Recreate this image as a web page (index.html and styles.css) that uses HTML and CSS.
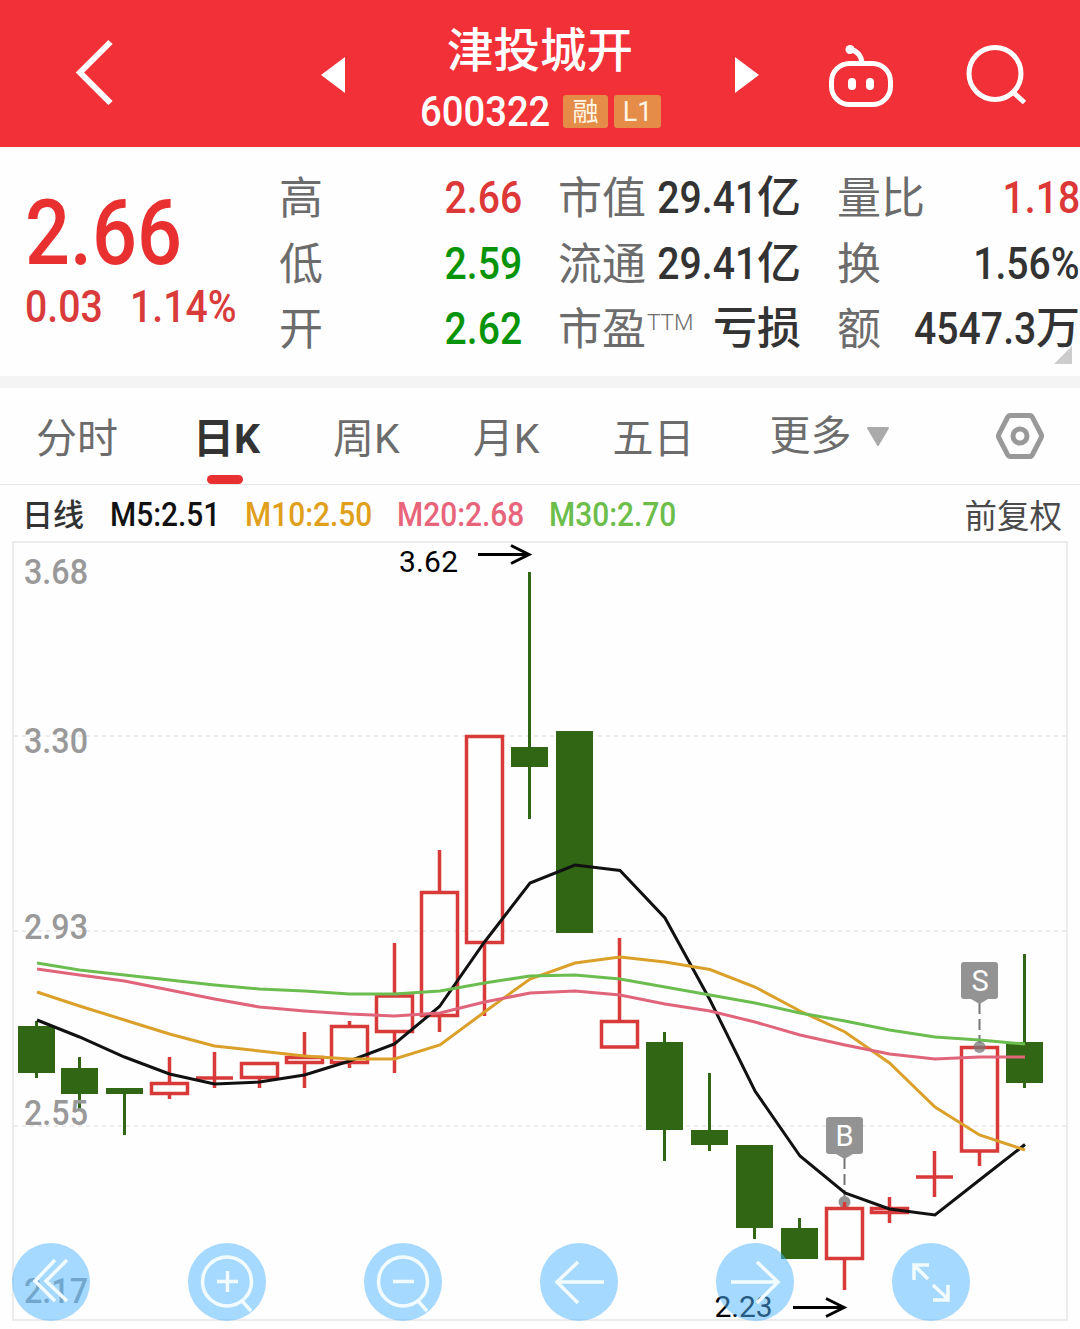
FILE: index.html
```html
<!DOCTYPE html>
<html lang="zh-CN">
<head>
    <meta charset="UTF-8">
    <meta name="viewport" content="width=device-width, initial-scale=1.0">
    <title>津投城开 600322</title>
    <link rel="stylesheet" href="styles.css">
</head>
<body>

    <!-- Header -->
    <header class="header">
        <svg class="back" width="40" height="68" viewBox="0 0 40 68"><path d="M36.500 5 L6 35.500 L36.500 66"/></svg>
        <svg class="prev" width="24" height="36" viewBox="0 0 24 36"><path d="M0 18 L24 0 V36 Z"/></svg>
        <div class="stock">
            <h1>津投城开</h1>
            <div class="code-row">
                <span class="code"><span class="num">600322</span></span>
                <span class="tag">融</span>
                <span class="tag tag-level">L1</span>
            </div>
        </div>
        <svg class="next" width="24" height="36" viewBox="0 0 24 36"><path d="M24 18 L0 0 V36 Z"/></svg>
        <svg class="robot" width="64" height="64" viewBox="0 0 64 64">
            <rect x="2.5" y="20.5" width="59" height="41" rx="18"/>
            <path d="M21 6 Q32 9 33 20"/>
            <circle class="fill" cx="21" cy="6.5" r="4.5"/>
            <rect class="fill" x="19" y="35" width="8" height="12" rx="4"/>
            <rect class="fill" x="37" y="35" width="8" height="12" rx="4"/>
        </svg>
        <svg class="search" width="62" height="62" viewBox="0 0 62 62">
            <circle cx="29" cy="29.500" r="26"/>
            <path d="M48 49 L58.500 58.500"/>
        </svg>
    </header>

    <!-- Quote -->
    <section class="quote">
        <div class="price">
            <div class="current"><span class="num">2.66</span></div>
            <div class="change"><span class="num">0.03</span><span class="num">1.14%</span></div>
        </div>
        <div class="stats">
            <div class="stat"><label>高</label><b class="up"><span class="num">2.66</span></b></div>
            <div class="stat"><label>市值</label><b><span class="num">29.41</span>亿</b></div>
            <div class="stat"><label>量比</label><b class="up"><span class="num">1.18</span></b></div>
            <div class="stat"><label>低</label><b class="down"><span class="num">2.59</span></b></div>
            <div class="stat"><label>流通</label><b><span class="num">29.41</span>亿</b></div>
            <div class="stat"><label>换</label><b><span class="num">1.56%</span></b></div>
            <div class="stat"><label>开</label><b class="down"><span class="num">2.62</span></b></div>
            <div class="stat"><label>市盈<sup>TTM</sup></label><b>亏损</b></div>
            <div class="stat"><label>额</label><b><span class="num">4547.3</span>万</b></div>
        </div>
        <i class="corner"></i>
    </section>

    <!-- Period tabs -->
    <nav class="tabs">
        <a>分时</a>
        <a class="active">日K</a>
        <a>周K</a>
        <a>月K</a>
        <a>五日</a>
        <a class="more">更多<svg width="22" height="19" viewBox="0 0 22 19"><path d="M1 1 H21 L11 18 Z"/></svg></a>
        <svg class="settings" width="50" height="48" viewBox="0 0 50 48">
            <path d="M15.500 3.500 H34.500 Q36.500 3.500 37.500 5.500 L46 22 Q47 24 46 26 L37.500 42.500 Q36.500 44.500 34.500 44.500 H15.500 Q13.500 44.500 12.500 42.500 L4 26 Q3 24 4 22 L12.500 5.500 Q13.500 3.500 15.500 3.500 Z"/>
            <circle cx="25" cy="24" r="7"/>
        </svg>
    </nav>

    <!-- Moving averages -->
    <div class="averages">
        <span class="line-name">日线</span>
        <span class="ma ma5"><span class="num">M5:2.51</span></span>
        <span class="ma ma10"><span class="num">M10:2.50</span></span>
        <span class="ma ma20"><span class="num">M20:2.68</span></span>
        <span class="ma ma30"><span class="num">M30:2.70</span></span>
        <span class="adjust">前复权</span>
    </div>

    <!-- Chart -->
    <section class="chart">
        <svg class="candles" width="1080" height="788" viewBox="0 541 1080 788">
            <rect class="frame" x="13" y="542" width="1054" height="778"/>
            <path class="grid" d="M14 736 H1066 M14 931 H1066 M14 1126 H1066"/>

            <!-- falling days -->
            <path class="wick-down" d="M36.500 1021 V1078 M79.500 1057 V1109 M124.500 1088 V1135 M529.500 572 V819 M664.500 1032 V1161 M709.500 1073 V1151 M754.500 1200 V1239 M799.500 1218 V1240 M1024.500 954 V1088"/>
            <g class="down-body">
                <rect x="18" y="1026" width="37" height="47"/>
                <rect x="61" y="1068" width="37" height="26"/>
                <rect x="106" y="1088" width="37" height="6"/>
                <rect x="511" y="747" width="37" height="20"/>
                <rect x="556" y="731" width="37" height="202"/>
                <rect x="646" y="1042" width="37" height="88"/>
                <rect x="691" y="1130" width="37" height="15"/>
                <rect x="736" y="1145" width="37" height="83"/>
                <rect x="781" y="1228" width="37" height="31"/>
                <rect x="1006" y="1042" width="37" height="41"/>
            </g>

            <!-- signal pointers sit under the candles -->
            <g class="signal">
                <path class="pointer" d="M844.500 1158 V1198 M979.500 1003 V1043"/>
                <circle cx="844.500" cy="1202" r="6"/>
            </g>

            <!-- rising days -->
            <path class="up-body" d="M151.500 1083.500 h36 v10 h-36 Z M241.500 1063.500 h36 v14 h-36 Z M286.500 1057.500 h36 v5 h-36 Z M331.500 1026.500 h36 v36 h-36 Z M376.500 996 h36 v35.500 h-36 Z M421.500 892.500 h36 v123 h-36 Z M466.500 736.500 h36 v206 h-36 Z M601.500 1021.500 h36 v25.500 h-36 Z M826.500 1208.500 h36 v50 h-36 Z M871.500 1208.500 h36 v4 h-36 Z M961.500 1047.500 h36 v103.500 h-36 Z"/>
            <path class="wick-up" d="M169.500 1057 V1082 M169.500 1095 V1099 M214.500 1052 V1088 M196 1078 H233 M259.500 1079 V1088 M304.500 1032 V1056 M304.500 1064 V1088 M349.500 1021 V1025 M349.500 1064 V1068 M394.500 943 V995 M394.500 1033 V1073 M439.500 850 V891 M439.500 1017 V1032 M484.500 944 V1016 M619.500 938 V1020 M844.500 1202 V1207 M844.500 1260 V1290 M889.500 1197 V1223 M934.500 1151 V1197 M916 1177 H953 M979.500 1152 V1166"/>

            <!-- average lines -->
            <polyline class="line5" points="37,1020 79.500,1037 124.500,1057 169.500,1074 214.500,1084 259.500,1082 304.500,1075 349.500,1061 394.500,1044 439.500,1006.500 484.500,942 530,883 575,865 620,870.500 665,918 710,1000 755,1091 800,1156 845,1193 889.500,1209 935,1215 979.500,1180 1025,1144.500"/>
            <polyline class="line10" points="37,992 79.500,1006 124.500,1020 169.500,1034 214.500,1046 259.500,1051 304.500,1056 349.500,1059 394.500,1059 440,1045 484.500,1012 530,979 575,963 620,957 665,962 710,969.500 755,987 800,1011 845,1032 889.500,1063 935,1107 979.500,1135 1025,1150"/>
            <polyline class="line20" points="37,969 79.500,975 124.500,981 169.500,990 214.500,999 259.500,1007 304.500,1011 349.500,1014 394.500,1016 440,1013 484.500,1002 530,993 575,991 620,995 665,1004 710,1011 755,1022 800,1035 845,1045 889.500,1054 935,1059 979.500,1057 1025,1057"/>
            <polyline class="line30" points="37,963 79.500,970 124.500,975 169.500,980 214.500,985 259.500,989 304.500,991 349.500,994 394.500,994 440,991 484.500,983 530,976 575,975 620,979 665,987 710,995 755,1003 800,1013 845,1021 889.500,1030 935,1037 979.500,1040 1025,1044"/>

            <!-- buy / sell flags -->
            <g class="signal">
                <circle class="sell-dot" cx="979.500" cy="1047" r="6"/>
                <path d="M829 1117 h31 q3 0 3 3 v31 q0 3 -3 3 h-7 l-8.500 5 l-8.500 -5 h-7 q-3 0 -3 -3 v-31 q0 -3 3 -3 Z"/>
                <path d="M964 962 h31 q3 0 3 3 v31 q0 3 -3 3 h-7 l-8.500 5 l-8.500 -5 h-7 q-3 0 -3 -3 v-31 q0 -3 3 -3 Z"/>
                <text x="844.500" y="1145.500">B</text>
                <text x="980" y="990.500">S</text>
            </g>

            <g class="axis">
                <text x="24" y="584" textLength="64" lengthAdjust="spacingAndGlyphs">3.68</text>
                <text x="24" y="753" textLength="64" lengthAdjust="spacingAndGlyphs">3.30</text>
                <text x="24" y="939" textLength="64" lengthAdjust="spacingAndGlyphs">2.93</text>
                <text x="24" y="1125" textLength="64" lengthAdjust="spacingAndGlyphs">2.55</text>
                <text x="24" y="1303" textLength="64" lengthAdjust="spacingAndGlyphs">2.17</text>
            </g>

            <!-- highest / lowest price -->
            <g class="extreme">
                <text x="399" y="572" textLength="59" lengthAdjust="spacing">3.62</text>
                <path d="M478 554.500 H529 M511 545.500 L529 554.500 L511 563.500"/>
                <text x="714.500" y="1317" textLength="58" lengthAdjust="spacing">2.23</text>
                <path d="M793 1307.500 H844 M826 1298.500 L844 1307.500 L826 1316.500"/>
            </g>
        </svg>

        <div class="toolbar">
            <button><svg viewBox="0 0 78 78"><path d="M43 17 L23 38 L43 58 M55 17 L34 38 L55 58"/></svg></button>
            <button><svg viewBox="0 0 78 78"><circle cx="39" cy="38.500" r="24.500"/><path d="M29 38.500 H50 M39.500 28 V49 M54 58 L63 68"/></svg></button>
            <button><svg viewBox="0 0 78 78"><circle cx="39" cy="38.500" r="24.500"/><path d="M29 38.500 H50 M54 58 L63 68"/></svg></button>
            <button><svg viewBox="0 0 78 78"><path d="M64 39 H17 M38 19 L17 39 L38 60"/></svg></button>
            <button><svg viewBox="0 0 78 78"><path d="M15 39 H62 M41 19 L62 39 L41 60"/></svg></button>
            <button><svg viewBox="0 0 78 78"><path d="M36 36 L22 22 M22 37 V22 H37 M41 42 L56 56 M56 42 V57 H41"/></svg></button>
        </div>
    </section>

</body>
</html>
```
FILE: styles.css
```css
* {
    margin: 0;
    padding: 0;
    box-sizing: border-box;
    font-family: "Roboto", "Noto Sans CJK SC", sans-serif;
}

body {
    background: #fefefe;
    color: #333;
    width: 1080px;
    height: 1329px;
    overflow: hidden;
}

svg {
    display: block;
    flex: none;
}

/* Narrow figures */
.num {
    display: inline-block;
    transform: scaleX(0.89);
    transform-origin: right center;
}

/* Header */
.header {
    display: flex;
    align-items: flex-start;
    height: 147px;
    background: #f23038;
    color: #fff;
}

.header svg {
    fill: none;
    stroke: #fff;
    stroke-width: 5;
}

.header .back {
    margin: 37px 0 0 74px;
    stroke-width: 6;
}

.header .prev,
.header .next {
    fill: #fff;
    stroke: none;
    margin-top: 57px;
}

.header .prev {
    margin-left: 207px;
}

.header .robot {
    margin: 43px 0 0 70px;
}

.header .search {
    margin: 44px 0 0 73px;
}

.header .fill {
    fill: #fff;
    stroke: none;
}

.stock {
    width: 390px;
    padding-top: 21px;
    text-align: center;
}

.stock h1 {
    font-size: 46.5px;
    font-weight: 500;
    line-height: 60px;
}

.code-row {
    display: flex;
    align-items: center;
    gap: 6px;
    margin: 13px 0 0 75px;
    height: 34px;
}

.code {
    width: 130px;
    margin-right: 7px;
    font-size: 42px;
    font-weight: 500;
    line-height: 37px;
    text-align: left;
}

.code .num {
    transform: scaleX(0.91);
    transform-origin: left center;
}

.tag {
    width: 45px;
    height: 33px;
    border-radius: 3px;
    background: #e48c48;
    font-size: 26px;
    line-height: 34px;
    color: #fff6e6;
}

.tag-level {
    width: 47px;
    font-size: 27px;
}

/* Quote */
.quote {
    display: flex;
    position: relative;
    height: 241px;
    border-bottom: 12px solid #f4f4f4;
}

.price {
    width: 279px;
    padding: 41px 0 0 25px;
    color: #e93030;
}

.price .num {
    transform-origin: left center;
}

.current {
    height: 90px;
    font-size: 90px;
    font-weight: 500;
    line-height: 91px;
}

.current .num {
    transform: scaleX(0.88);
}

.change {
    display: flex;
    gap: 17px;
    margin-top: 5px;
    font-size: 44.5px;
    font-weight: 500;
    line-height: 48px;
    color: #d93a3a;
}

.change .num {
    transform: scaleX(0.88);
}

.stats {
    display: grid;
    grid-template-columns: repeat(3, 243px);
    grid-auto-rows: 65.5px;
    column-gap: 36px;
    padding-top: 18px;
}

.stat {
    display: flex;
    justify-content: space-between;
    font-size: 44px;
    line-height: 66px;
    white-space: nowrap;
}

.stat label {
    padding-top: 1px;
    font-weight: 400;
    color: #6c6c6c;
}

.stat b {
    font-weight: 500;
}

.stat .num {
    margin-left: -20px;
}

.stat .up {
    color: #dc3838;
}

.stat .down {
    color: #089408;
}

.stat sup {
    display: inline-block;
    margin-left: 1px;
    font-size: 22.5px;
    font-weight: 300;
    line-height: 23px;
    vertical-align: 15px;
}

.corner {
    position: absolute;
    right: 8px;
    bottom: 12px;
    border-left: 18px solid transparent;
    border-bottom: 18px solid #ccc;
}

/* Tabs */
.tabs {
    display: flex;
    align-items: center;
    height: 97px;
    padding-left: 36px;
    border-bottom: 1px solid #e6e6e6;
    font-size: 41px;
    font-weight: 400;
    color: #6c6c6c;
}

.tabs a {
    position: relative;
    height: 96px;
    line-height: 102px;
    margin-right: 73px;
}

.tabs .active {
    margin-left: 2px;
    font-weight: 700;
    color: #333;
}

.tabs .active::after {
    content: "";
    position: absolute;
    left: 14px;
    bottom: 0;
    width: 36px;
    height: 9px;
    border-radius: 5px;
    background: #e93030;
}

.tabs .more {
    display: flex;
    align-items: center;
    gap: 15px;
    margin-left: 2px;
    margin-right: 0;
    line-height: 62px;
}

.more svg {
    fill: #aaa;
    stroke: #aaa;
    stroke-width: 2;
    stroke-linejoin: round;
}

.settings {
    margin-left: auto;
    margin-right: 35px;
    fill: none;
    stroke: #999;
    stroke-width: 5;
}

/* Averages */
.averages {
    display: flex;
    align-items: center;
    height: 56px;
    padding: 4px 18px 0 22px;
    font-size: 32.5px;
    font-weight: 500;
    line-height: 52px;
}

.averages .num {
    transform: scaleX(0.92);
    transform-origin: left center;
}

.line-name {
    width: 88px;
    padding-top: 1px;
    font-size: 31px;
}

.ma {
    width: 152px;
}

.ma5 {
    width: 135px;
    color: #111;
}

.ma10 {
    color: #e0a01c;
}

.ma20 {
    color: #e8647a;
}

.ma30 {
    color: #6cbd4a;
}

.adjust {
    margin-left: auto;
    padding-top: 3px;
    font-weight: 400;
    color: #4a4a4a;
}

/* Chart */
.chart {
    position: relative;
    height: 788px;
}

.candles polyline,
.candles .frame,
.candles .grid {
    fill: none;
    stroke-width: 3;
}

.candles .frame {
    stroke: #ececec;
    stroke-width: 2;
}

.candles .grid {
    stroke: #ececec;
    stroke-width: 2;
    stroke-dasharray: 4 4;
}

.down-body {
    fill: #306614;
}

.wick-down {
    stroke: #306614;
    stroke-width: 3;
}

.wick-up,
.up-body {
    fill: none;
    stroke: #d83a3a;
    stroke-width: 3.5;
}

.line5 {
    stroke: #111;
}

.line10 {
    stroke: #dba02a;
}

.line20 {
    stroke: #e0647a;
}

.line30 {
    stroke: #6cbd50;
}

.signal {
    fill: #939393;
}

.signal .pointer {
    stroke: #777;
    stroke-width: 2;
    stroke-dasharray: 11 5;
}

.signal .sell-dot {
    fill: rgba(120, 120, 120, 0.75);
}

.signal text {
    fill: #fff;
    font-size: 29px;
    text-anchor: middle;
}

.axis {
    fill: #999;
    font-size: 35.5px;
    font-weight: 500;
}

.extreme {
    font-size: 30px;
}

.extreme path {
    fill: none;
    stroke: #000;
    stroke-width: 3;
}

/* Toolbar */
.toolbar {
    position: absolute;
    left: 12px;
    top: 702px;
    display: flex;
    gap: 98px;
}

.toolbar button {
    width: 78px;
    height: 78px;
    border: none;
    border-radius: 50%;
    background: rgba(77, 180, 255, 0.5);
}

.toolbar svg {
    fill: none;
    stroke: #f2fcff;
    stroke-width: 3.5;
}
```
